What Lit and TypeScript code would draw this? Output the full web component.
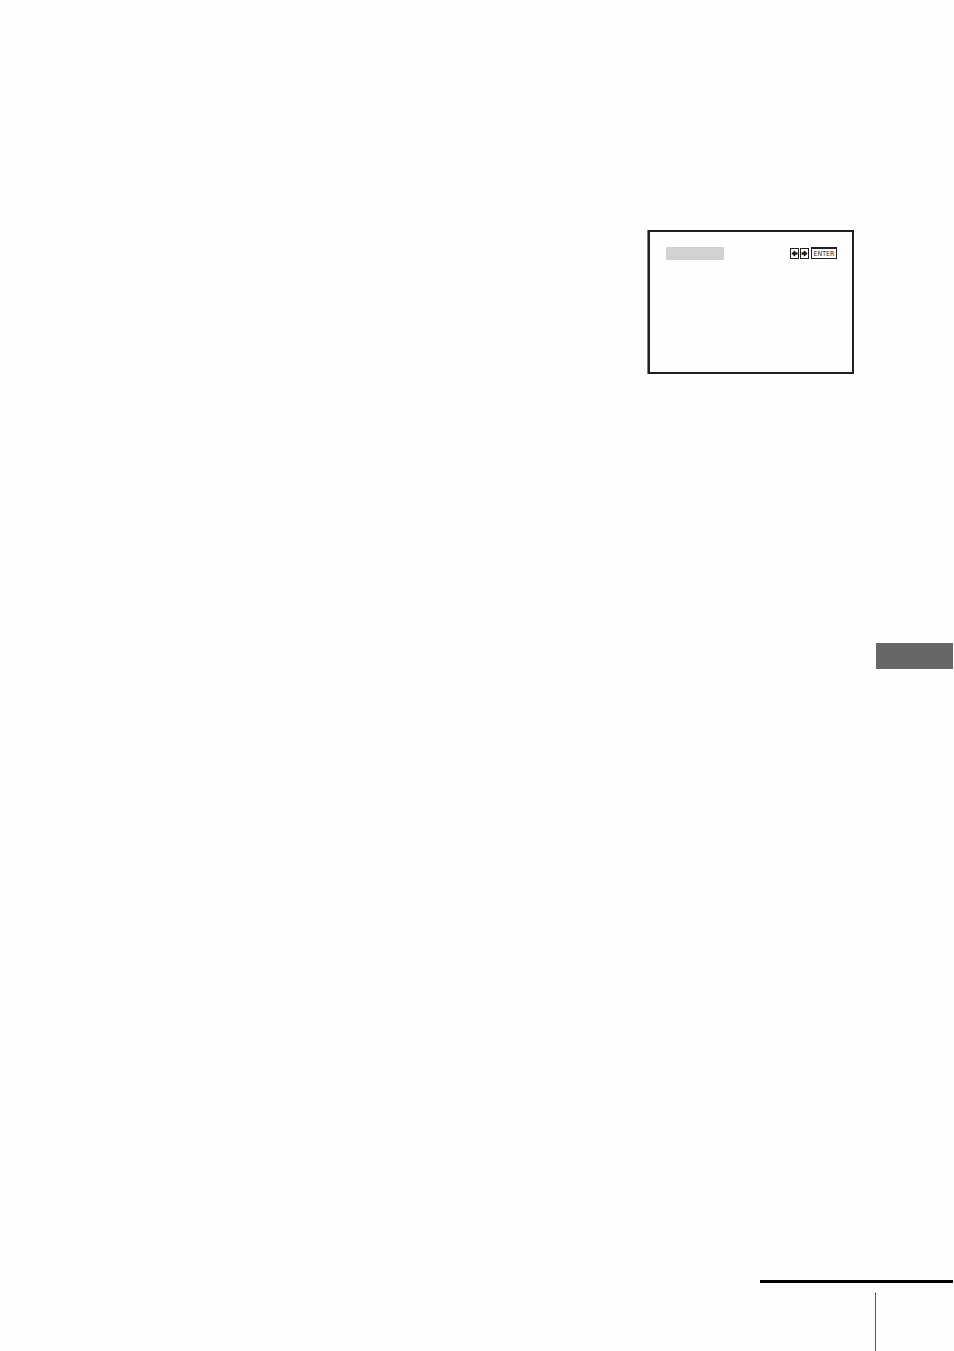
import { LitElement, html, css } from "lit";
import { customElement } from "lit/decorators.js";

@customElement("app-root")
export class AppRoot extends LitElement {
  static styles = css`
    :host {
      display: block;
      background: #fefefe;
      font-family: "DejaVu Sans Condensed", "DejaVu Sans", sans-serif;
      color: #231f20;
    }
    .page {
      box-sizing: border-box;
      min-height: 100vh;
      padding: 230px 1px 0 0;
      display: flex;
      flex-direction: column;
      align-items: flex-end;
    }
    .screen {
      box-sizing: border-box;
      width: 207px;
      min-height: 144px;
      margin-right: 99px;
      border-left: 1px solid #808080;
    }
    .frame {
      box-sizing: border-box;
      min-height: 144px;
      border: 2px solid #231f20;
      padding: 15px 15px 0 16px;
      display: flex;
      justify-content: space-between;
      align-items: flex-start;
    }
    .title {
      width: 58px;
      height: 13px;
      background: #d1d2d4;
    }
    .keys {
      display: flex;
      align-items: flex-end;
      gap: 1px;
    }
    .key {
      box-sizing: border-box;
      display: flex;
      align-items: center;
      justify-content: center;
      width: 9px;
      height: 11px;
      padding: 0;
      border: 1px solid #231f20;
      border-radius: 0;
      background: #fefefe;
      color: inherit;
      font-family: inherit;
      font-size: 7px;
      line-height: 9px;
    }
    .enter {
      width: 26px;
      height: 12px;
      margin-left: 1px;
      padding-top: 1px;
      border-top-width: 2px;
    }
    .arrow {
      display: block;
      flex: none;
      width: 7px;
      height: 9px;
      fill: currentColor;
    }
    .tab {
      width: 77px;
      height: 26px;
      margin-top: 269px;
      background: #666666;
    }
    .footer {
      width: 193px;
      margin-top: auto;
      padding-top: 10px;
      border-top: 3px solid #000000;
      display: flex;
      justify-content: flex-end;
    }
    .folio {
      box-sizing: border-box;
      width: 78px;
      height: 58px;
      background: linear-gradient(#000000 1px, #595959 1px) left / 1px 100% no-repeat;
    }
  `;

  render() {
    return html`
      <main class="page">
        <section class="screen">
          <div class="frame">
            <div class="title"></div>
            <div class="keys">
              <button class="key" type="button" aria-label="Left">
                <svg class="arrow" viewBox="0 0 7 9" aria-hidden="true">
                  <path d="M.5 4.5 3.2 1.8H4.3V3.2H6.5V5.8H4.3V7.2H3.2Z" />
                </svg>
              </button>
              <button class="key" type="button" aria-label="Right">
                <svg class="arrow" viewBox="0 0 7 9" aria-hidden="true">
                  <path d="M6.5 4.5 3.8 1.8H2.7V3.2H.5V5.8H2.7V7.2H3.8Z" />
                </svg>
              </button>
              <button class="key enter" type="button">ENTER</button>
            </div>
          </div>
        </section>
        <div class="tab"></div>
        <footer class="footer"><div class="folio"></div></footer>
      </main>
    `;
  }
}
